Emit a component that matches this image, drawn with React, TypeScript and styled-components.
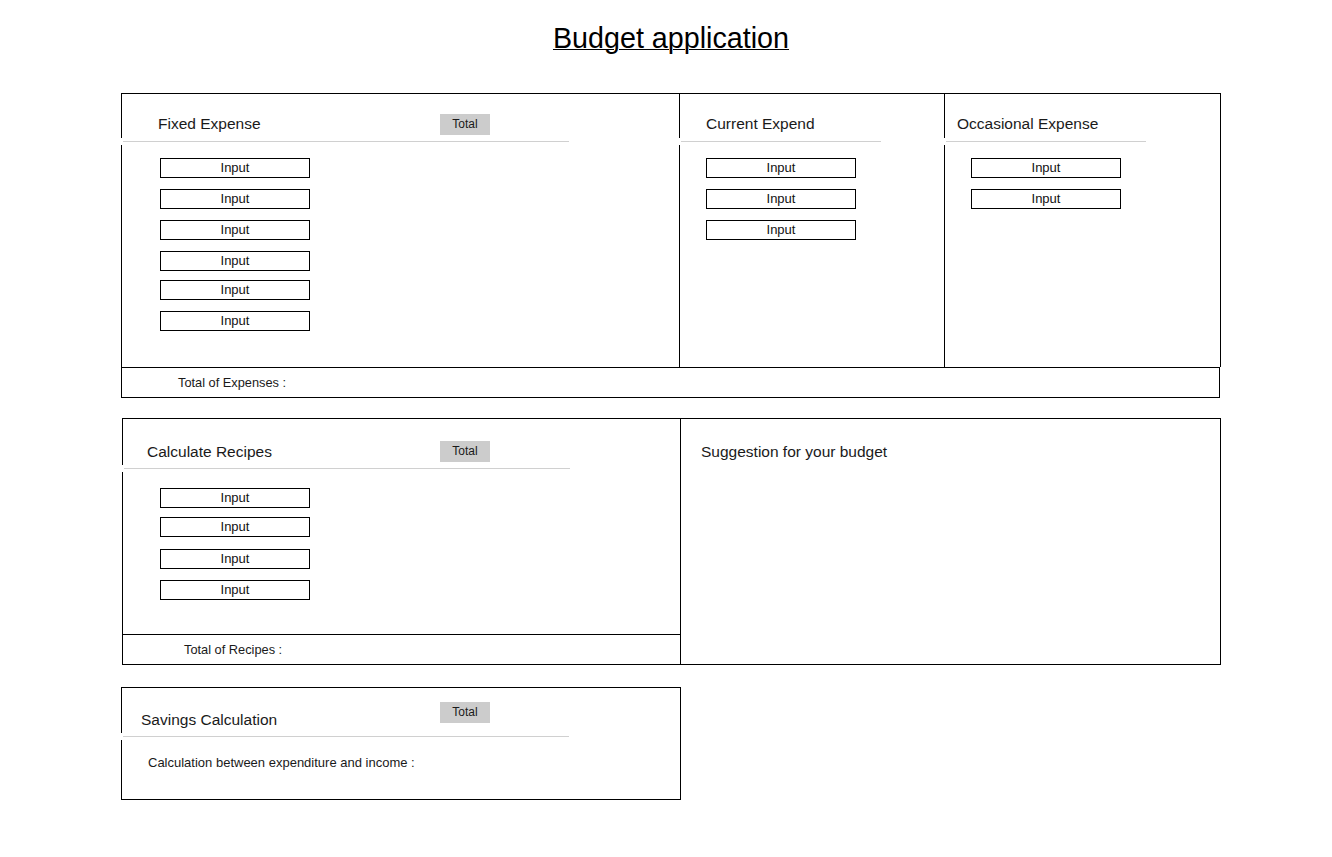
import React from "react"
import styled, { createGlobalStyle } from "styled-components"

const GlobalStyle = createGlobalStyle`
  * { box-sizing: border-box; }
  body {
    margin: 0;
    background: #fff;
    color: #1a1a1a;
    font-family: "Liberation Sans", Arial, sans-serif;
  }
`

const Page = styled.div`
  width: 1100px;
  margin-left: 121px;
  padding: 22px 0 40px;
`

const Title = styled.h1`
  margin: 0 0 39px;
  font-size: 28.7px;
  line-height: 32px;
  font-weight: normal;
  text-align: center;
  text-decoration: underline;
  text-decoration-thickness: 1px;
  color: #000;
`

// --- shared column parts ---

const Head = styled.div<{ $h: number; $top: number; $badgeAt?: number }>`
  display: grid;
  grid-template-columns: ${(p) => p.$badgeAt ?? 318}px 50px;
  align-items: center;
  height: ${(p) => p.$h}px;
  padding-top: ${(p) => p.$top}px;
  border-left: 1px solid #000;
`

const SectionName = styled.div<{ $x: number }>`
  padding-left: ${(p) => p.$x}px;
  font-size: 15.5px;
  line-height: 18px;
  white-space: nowrap;
`

// $lift raises the badge above the title's middle line
const Badge = styled.div<{ $lift?: number }>`
  width: 50px;
  height: 21px;
  margin-top: ${(p) => -(p.$lift || 0) * 2}px;
  background: #cccccc;
  font-size: 12px;
  line-height: 21px;
  text-align: center;
`

const Divider = styled.div<{ $w: number }>`
  width: ${(p) => p.$w}px;
  height: 1px;
  margin: 3px 0 3px 2px;
  background: #d0d0d0;
`

const Body = styled.div<{ $x: number }>`
  flex: 1;
  display: flex;
  flex-direction: column;
  align-items: flex-start;
  padding-left: ${(p) => p.$x}px;
  border-left: 1px solid #000;
`

const Field = styled.div<{ $gap: number }>`
  width: 150px;
  height: 20px;
  margin-top: ${(p) => p.$gap}px;
  border: 1px solid #000;
  font-size: 13px;
  line-height: 18px;
  text-align: center;
  color: #111;
`

const Footer = styled.div<{ $x: number; $w: number }>`
  display: flex;
  align-items: center;
  width: ${(p) => p.$w}px;
  height: 31px;
  padding-left: ${(p) => p.$x}px;
  border: 1px solid #000;
  font-size: 12.8px;
`

// --- expenses board ---

const Board = styled.section`
  display: grid;
  grid-template-columns: 558px 265px 276px;
  height: 274px;
  border-top: 1px solid #000;
  border-right: 1px solid #000;
`

const Column = styled.div`
  display: flex;
  flex-direction: column;
`

// --- recipes row ---

const Row = styled.section`
  display: flex;
  margin-top: 20px;
  padding-left: 1px;
`

const LeftPart = styled.div`
  display: flex;
  flex-direction: column;
  width: 558px;
`

const Card = styled.div`
  display: flex;
  flex-direction: column;
  height: 216px;
  border-top: 1px solid #000;
`

const Suggest = styled.div`
  width: 541px;
  height: 247px;
  padding: 24px 0 0 20px;
  border: 1px solid #000;
  font-size: 15.5px;
  line-height: 18px;
`

// --- savings ---

const Savings = styled.section`
  display: flex;
  flex-direction: column;
  width: 560px;
  height: 113px;
  margin-top: 22px;
  border: 1px solid #000;
  border-left: none;
`

const Note = styled.div`
  padding: 15px 0 0 26px;
  font-size: 13px;
  line-height: 16px;
`

interface Group {
  name: string
  nameX: number
  fieldX: number
  line: number
  gaps: number[]
  total?: boolean
}

const expenses: Group[] = [
  { name: "Fixed Expense", nameX: 36, fieldX: 38, line: 446, gaps: [13, 11, 11, 11, 9, 11], total: true },
  { name: "Current Expend", nameX: 26, fieldX: 26, line: 200, gaps: [13, 11, 11] },
  { name: "Occasional Expense", nameX: 12, fieldX: 26, line: 200, gaps: [13, 11] },
]

const recipeGaps = [16, 9, 12, 11]

const Fields = ({ gaps }: { gaps: number[] }) => (
  <>
    {gaps.map((g, i) => (
      <Field key={i} $gap={g}>Input</Field>
    ))}
  </>
)

const App = () => {
  return (
    <Page>
      <GlobalStyle />
      <Title>Budget application</Title>

      <Board>
        {expenses.map((col) => (
          <Column key={col.name}>
            <Head $h={44} $top={16}>
              <SectionName $x={col.nameX}>{col.name}</SectionName>
              {col.total && <Badge>Total</Badge>}
            </Head>
            <Divider $w={col.line} />
            <Body $x={col.fieldX}>
              <Fields gaps={col.gaps} />
            </Body>
          </Column>
        ))}
      </Board>
      <Footer $x={56} $w={1099}>Total of Expenses :</Footer>

      <Row>
        <LeftPart>
          <Card>
            <Head $h={46} $top={19} $badgeAt={317}>
              <SectionName $x={24}>Calculate Recipes</SectionName>
              <Badge>Total</Badge>
            </Head>
            <Divider $w={446} />
            <Body $x={37}>
              <Fields gaps={recipeGaps} />
            </Body>
          </Card>
          <Footer $x={61} $w={559}>Total of Recipes :</Footer>
        </LeftPart>
        <Suggest>Suggestion for your budget</Suggest>
      </Row>

      <Savings>
        <Head $h={45} $top={18}>
          <SectionName $x={19}>Savings Calculation</SectionName>
          <Badge $lift={7}>Total</Badge>
        </Head>
        <Divider $w={446} />
        <Body $x={0}>
          <Note>Calculation between expenditure and income :</Note>
        </Body>
      </Savings>
    </Page>
  )
}

export default App
